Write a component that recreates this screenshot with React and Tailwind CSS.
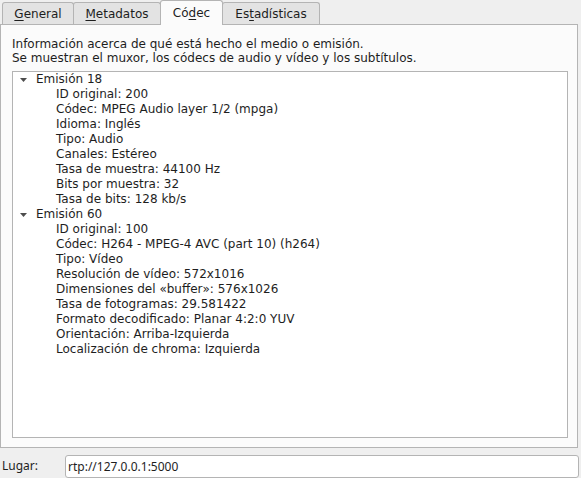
import React from "react";

const Tab = ({ pre, u, post, active, w }) => (
  <div
    className={
      active
        ? "relative z-10 -mb-px flex h-[25px] items-center justify-center border border-b-0 border-[#b4b4b4] bg-[#fbfbfb] rounded-t-[3px] -ml-px"
        : "flex h-[23px] pb-[1px] items-center justify-center border border-b-0 border-[#b4b4b4] bg-[#e3e3e3] rounded-t-[3px] -ml-px first:ml-0 -mb-px"
    }
    style={{ width: w }}
  >
    <span className="text-[12px] leading-[14px] text-[#1e1e1e]">
      {pre}
      <span className="underline underline-offset-2">{u}</span>
      {post}
    </span>
  </div>
);

const Row = ({ children, indent }) => (
  <div className={"h-[15px] flex items-center whitespace-nowrap " + (indent ? "pl-[43px]" : "pl-[23px]")}>
    {children}
  </div>
);

const Group = ({ title, items }) => (
  <>
    <div className="relative h-[15px] flex items-center whitespace-nowrap pl-[23px]">
      <svg className="absolute left-[7px] top-[6px]" width="7" height="4" viewBox="0 0 7 4">
        <polygon points="0,0 7,0 3.5,4" fill="#4d4d4d" />
      </svg>
      {title}
    </div>
    {items.map((t) => (
      <Row key={t} indent>
        {t}
      </Row>
    ))}
  </>
);

export default function App() {
  return (
    <div
      className="w-[581px] h-[478px] bg-[#efefef] flex flex-col overflow-hidden text-[#1e1e1e]"
      style={{ fontFamily: '"DejaVu Sans", sans-serif' }}
    >
      <div className="flex items-end pl-[2px] h-[24px]">
        <Tab pre="" u="G" post="eneral" w={72} />
        <Tab pre="" u="M" post="etadatos" w={88} />
        <Tab pre="Có" u="d" post="ec" active w={63} />
        <Tab pre="Es" u="t" post="adísticas" w={98} />
      </div>
      <div className="w-[578px] h-[424px] border border-[#b4b4b4] bg-[#fbfbfb] pt-[12px] pl-[11px] pr-[9px] pb-[9px] flex flex-col">
        <div className="text-[12px] leading-[14px]">
          <div>Información acerca de qué está hecho el medio o emisión.</div>
          <div>Se muestran el muxor, los códecs de audio y vídeo y los subtítulos.</div>
        </div>
        <div className="mt-[6px] flex-1 border border-[#b4b4b4] bg-white text-[12px] leading-[15px]">
          <Group
            title="Emisión 18"
            items={[
              "ID original: 200",
              "Códec: MPEG Audio layer 1/2 (mpga)",
              "Idioma: Inglés",
              "Tipo: Audio",
              "Canales: Estéreo",
              "Tasa de muestra: 44100 Hz",
              "Bits por muestra: 32",
              "Tasa de bits: 128 kb/s",
            ]}
          />
          <Group
            title="Emisión 60"
            items={[
              "ID original: 100",
              "Códec: H264 - MPEG-4 AVC (part 10) (h264)",
              "Tipo: Vídeo",
              "Resolución de vídeo: 572x1016",
              "Dimensiones del «buffer»: 576x1026",
              "Tasa de fotogramas: 29.581422",
              "Formato decodificado: Planar 4:2:0 YUV",
              "Orientación: Arriba-Izquierda",
              "Localización de chroma: Izquierda",
            ]}
          />
        </div>
      </div>
      <div
        className="flex items-end h-[30px] pl-[2px]"
        style={{ fontFamily: '"Noto Sans", sans-serif' }}
      >
        <div className="w-[63px] text-[12px] leading-[16px] mb-[4px]">Lugar:</div>
        <div className="w-[514px] h-[23px] border border-[#b4b4b4] rounded-[3px] bg-white flex items-center pl-[2px] text-[12px]">
          rtp://127.0.0.1:5000
        </div>
      </div>
    </div>
  );
}
